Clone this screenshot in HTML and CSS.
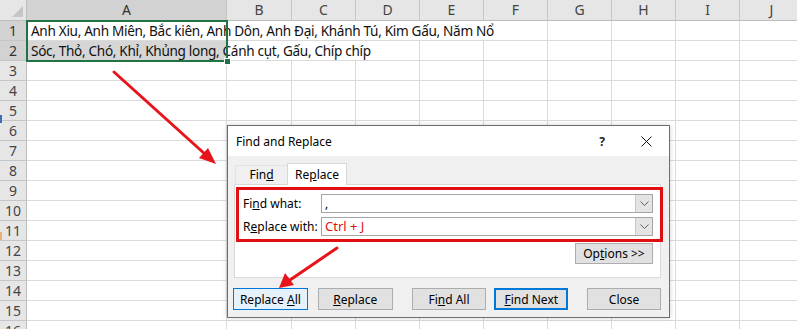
FILE: index.html
```html
<!DOCTYPE html>
<html>
<head>
<meta charset="utf-8">
<link rel="stylesheet" href="styles.css">
</head>
<body>
<div class="sheet">
  <div class="corner"><span class="tri"></span></div>
  <div class="ch sel">A</div><div class="ch">B</div><div class="ch">C</div><div class="ch">D</div><div class="ch">E</div><div class="ch">F</div><div class="ch">G</div><div class="ch">H</div><div class="ch">I</div><div class="ch">J</div>

  <div class="rh sel">1</div><div class="cell txt span6">Anh Xiu, Anh Miên, Bắc kiên, Anh Dôn, Anh Đại, Khánh Tú, Kim Gấu, Năm Nổ</div><div class="cell"></div><div class="cell"></div><div class="cell"></div><div class="cell"></div>

  <div class="rh sel">2</div><div class="cell txt span4 grayA">Sóc, Thỏ, Chó, Khỉ, Khủng long, Cánh cụt, Gấu, Chíp chíp</div><div class="cell"></div><div class="cell"></div><div class="cell"></div><div class="cell"></div><div class="cell"></div><div class="cell"></div>

  <div class="rh">3</div><div class="cell"></div><div class="cell"></div><div class="cell"></div><div class="cell"></div><div class="cell"></div><div class="cell"></div><div class="cell"></div><div class="cell"></div><div class="cell"></div><div class="cell"></div>
  <div class="rh">4</div><div class="cell"></div><div class="cell"></div><div class="cell"></div><div class="cell"></div><div class="cell"></div><div class="cell"></div><div class="cell"></div><div class="cell"></div><div class="cell"></div><div class="cell"></div>
  <div class="rh">5</div><div class="cell"></div><div class="cell"></div><div class="cell"></div><div class="cell"></div><div class="cell"></div><div class="cell"></div><div class="cell"></div><div class="cell"></div><div class="cell"></div><div class="cell"></div>
  <div class="rh">6</div><div class="cell"></div><div class="cell"></div><div class="cell"></div><div class="cell"></div><div class="cell"></div><div class="cell"></div><div class="cell"></div><div class="cell"></div><div class="cell"></div><div class="cell"></div>
  <div class="rh">7</div><div class="cell"></div><div class="cell"></div><div class="cell"></div><div class="cell"></div><div class="cell"></div><div class="cell"></div><div class="cell"></div><div class="cell"></div><div class="cell"></div><div class="cell"></div>
  <div class="rh">8</div><div class="cell"></div><div class="cell"></div><div class="cell"></div><div class="cell"></div><div class="cell"></div><div class="cell"></div><div class="cell"></div><div class="cell"></div><div class="cell"></div><div class="cell"></div>
  <div class="rh">9</div><div class="cell"></div><div class="cell"></div><div class="cell"></div><div class="cell"></div><div class="cell"></div><div class="cell"></div><div class="cell"></div><div class="cell"></div><div class="cell"></div><div class="cell"></div>
  <div class="rh">10</div><div class="cell"></div><div class="cell"></div><div class="cell"></div><div class="cell"></div><div class="cell"></div><div class="cell"></div><div class="cell"></div><div class="cell"></div><div class="cell"></div><div class="cell"></div>
  <div class="rh">11</div><div class="cell"></div><div class="cell"></div><div class="cell"></div><div class="cell"></div><div class="cell"></div><div class="cell"></div><div class="cell"></div><div class="cell"></div><div class="cell"></div><div class="cell"></div>
  <div class="rh">12</div><div class="cell"></div><div class="cell"></div><div class="cell"></div><div class="cell"></div><div class="cell"></div><div class="cell"></div><div class="cell"></div><div class="cell"></div><div class="cell"></div><div class="cell"></div>
  <div class="rh">13</div><div class="cell"></div><div class="cell"></div><div class="cell"></div><div class="cell"></div><div class="cell"></div><div class="cell"></div><div class="cell"></div><div class="cell"></div><div class="cell"></div><div class="cell"></div>
  <div class="rh">14</div><div class="cell"></div><div class="cell"></div><div class="cell"></div><div class="cell"></div><div class="cell"></div><div class="cell"></div><div class="cell"></div><div class="cell"></div><div class="cell"></div><div class="cell"></div>
  <div class="rh">15</div><div class="cell"></div><div class="cell"></div><div class="cell"></div><div class="cell"></div><div class="cell"></div><div class="cell"></div><div class="cell"></div><div class="cell"></div><div class="cell"></div><div class="cell"></div>
  <div class="rh">16</div><div class="cell"></div><div class="cell"></div><div class="cell"></div><div class="cell"></div><div class="cell"></div><div class="cell"></div><div class="cell"></div><div class="cell"></div><div class="cell"></div><div class="cell"></div>
</div>

<div class="edge-mark blue"></div>
<div class="edge-mark orange"></div>

<div class="selection"><span class="handle"></span></div>

<div class="dialog">
  <div class="titlebar">
    <span class="title">Find and Replace</span>
    <span class="help">?</span>
    <span class="close-x">
      <svg width="11" height="11" viewBox="0 0 11 11"><path d="M0.5 0.5 L10.5 10.5 M10.5 0.5 L0.5 10.5" stroke="#111" stroke-width="1" fill="none"/></svg>
    </span>
  </div>
  <div class="dbody">
    <div class="tabs">
      <div class="tab">Fin<u>d</u></div>
      <div class="tab active">Re<u>p</u>lace</div>
    </div>
    <div class="panel">
      <div class="frow">
        <span class="label">Fi<u>n</u>d what:</span>
        <div class="combo"><span class="val">,</span><span class="drop"><svg width="9" height="5" viewBox="0 0 9 5"><path d="M0.5 0.5 L4.5 4.5 L8.5 0.5" stroke="#606060" fill="none"/></svg></span></div>
      </div>
      <div class="frow">
        <span class="label">R<u>e</u>place with:</span>
        <div class="combo"><span class="val red">Ctrl + J</span><span class="drop"><svg width="9" height="5" viewBox="0 0 9 5"><path d="M0.5 0.5 L4.5 4.5 L8.5 0.5" stroke="#606060" fill="none"/></svg></span></div>
      </div>
      <div class="orow"><button class="btn opt">Op<u>t</u>ions &gt;&gt;</button></div>
    </div>
    <div class="brow">
      <button class="btn primary">Replace <u>A</u>ll</button>
      <button class="btn g10"><u>R</u>eplace</button>
      <button class="btn g19">Fi<u>n</u>d All</button>
      <button class="btn g8 focus"><u>F</u>ind Next</button>
      <button class="btn g19">Close</button>
    </div>
  </div>
</div>

<div class="redbox"></div>

<svg class="arrows" width="797" height="329" viewBox="0 0 797 329">
  <line x1="114" y1="72" x2="206" y2="155" stroke="#e8141b" stroke-width="3" stroke-linecap="round"/>
  <polygon points="216,164 199,158 208,148" fill="#e8141b"/>
  <line x1="337" y1="248" x2="290" y2="280" stroke="#e8141b" stroke-width="3" stroke-linecap="round"/>
  <polygon points="279,288 285,273 294,285" fill="#e8141b"/>
</svg>
</body>
</html>
```

FILE: styles.css
```css
html, body {
  margin: 0;
  padding: 0;
}
body {
  width: 797px;
  height: 329px;
  overflow: hidden;
  position: relative;
  background: #fff;
  font-family: "Noto Sans", "DejaVu Sans", sans-serif;
}

.sheet {
  display: grid;
  grid-template-columns: 27px 200px 65px repeat(8, 64px);
  grid-template-rows: 21px;
  grid-auto-rows: 20px;
  width: 804px;
}
.sheet > div {
  box-sizing: border-box;
}
.corner {
  background: #e6e6e6;
  border-right: 1px solid #bdbdbd;
  border-bottom: 1px solid #bdbdbd;
  position: relative;
}
.corner .tri {
  position: absolute;
  right: 3px;
  bottom: 3px;
  width: 0;
  height: 0;
  border-left: 11px solid transparent;
  border-bottom: 11px solid #c6c6c6;
}
.ch {
  background: #e6e6e6;
  border-right: 1px solid #c6c6c6;
  border-bottom: 1px solid #bdbdbd;
  text-align: center;
  font-size: 14px;
  line-height: 20px;
  color: #444;
}
.rh {
  background: #e6e6e6;
  border-right: 1px solid #bdbdbd;
  border-bottom: 1px solid #c6c6c6;
  text-align: center;
  font-size: 14px;
  line-height: 19px;
  color: #444;
}
.ch.sel, .rh.sel {
  background: #d2d2d2;
  color: #333;
}
.cell {
  border-right: 1px solid #dadada;
  border-bottom: 1px solid #dadada;
}
.txt {
  font-size: 13.6px;
  line-height: 19px;
  padding-left: 4px;
  color: #111;
  white-space: nowrap;
  letter-spacing: -0.32px;
}
.span6 { grid-column: span 6; }
.span4 { grid-column: span 4; }
.grayA {
  background: linear-gradient(to right, #d6d6d6 199px, #fff 199px);
}

.edge-mark {
  position: absolute;
  left: 0;
  width: 2px;
  height: 8px;
}
.edge-mark.blue { top: 115px; background: #3b6fb6; }
.edge-mark.orange { top: 232px; background: #e8b07a; }

.selection {
  position: absolute;
  left: 26px;
  top: 20px;
  width: 202px;
  height: 42px;
  box-sizing: border-box;
  border: 2px solid #217346;
}
.selection .handle {
  position: absolute;
  right: -5px;
  bottom: -5px;
  width: 5px;
  height: 5px;
  background: #217346;
  border: 1px solid #fff;
}

.dialog {
  position: absolute;
  left: 227px;
  top: 125px;
  width: 443px;
  height: 193px;
  box-sizing: border-box;
  border: 1px solid #6e6e6e;
  background: #f0f0f0;
  font-family: "Noto Sans", "DejaVu Sans", sans-serif;
  font-size: 12px;
  color: #000;
  display: flex;
  flex-direction: column;
  box-shadow: 0 0 5px rgba(0, 0, 0, 0.18);
}
.titlebar {
  height: 30px;
  background: #fff;
  display: flex;
  align-items: center;
  padding-left: 8px;
}
.title {
  flex: 1;
  font-size: 12px;
}
.help {
  width: 14px;
  text-align: center;
  margin-right: 14px;
  font-size: 12px;
  font-weight: bold;
  color: #222;
}
.close-x {
  width: 46px;
  display: flex;
  justify-content: center;
  align-items: center;
}
.dbody {
  padding: 7px 8px 0 6px;
}
.tabs {
  display: flex;
  align-items: flex-end;
  height: 21px;
  margin-left: 1px;
  position: relative;
  z-index: 1;
}
.tab {
  box-sizing: border-box;
  width: 53px;
  height: 19px;
  line-height: 18px;
  text-align: center;
  border: 1px solid #e3e3e3;
  border-bottom: none;
  background: #f0f0f0;
}
.tab.active {
  width: 60px;
  height: 22px;
  line-height: 21px;
  background: #fff;
  border-color: #d9d9d9;
  margin-bottom: -1px;
  margin-left: -1px;
}
.panel {
  box-sizing: border-box;
  height: 94px;
  border: 1px solid #d9d9d9;
  background: #fff;
  padding: 9px 7px 9px 8px;
}
.frow {
  display: flex;
  align-items: center;
  height: 19px;
  margin-bottom: 4px;
}
.label {
  width: 78px;
}
.combo {
  box-sizing: border-box;
  width: 332px;
  height: 19px;
  border: 1px solid #a5a5a5;
  display: flex;
  align-items: center;
}
.combo .val {
  flex: 1;
  padding-left: 3px;
  font-size: 12px;
  line-height: 17px;
}
.combo .val.red {
  color: #e01010;
  font-size: 13px;
}
.drop {
  width: 16px;
  height: 17px;
  background: #e4e4e4;
  border-left: 1px solid #c8c8c8;
  display: flex;
  align-items: center;
  justify-content: center;
}
.orow {
  display: flex;
  justify-content: flex-end;
  margin-top: 7px;
}
.btn {
  box-sizing: border-box;
  height: 22px;
  width: 75px;
  padding: 0;
  border: 1px solid #adadad;
  background: #e1e1e1;
  font-family: "Noto Sans", "DejaVu Sans", sans-serif;
  font-size: 12px;
  color: #000;
}
.btn.opt {
  width: 78px;
  height: 21px;
}
.brow {
  display: flex;
  margin-top: 10px;
  margin-left: -1px;
}
.btn.primary {
  border-color: #0078d7;
  background: #e5f1fb;
}
.btn.focus {
  border: 2px solid #0078d7;
  width: 74px;
}
.g10 { margin-left: 10px; }
.g19 { margin-left: 19px; }
.g8 { margin-left: 8px; }
.brow .btn:last-child { width: 74px; }

.redbox {
  position: absolute;
  left: 236px;
  top: 187px;
  width: 427px;
  height: 55px;
  box-sizing: border-box;
  border: 3px solid #e10f12;
}
.arrows {
  position: absolute;
  left: 0;
  top: 0;
  pointer-events: none;
}
```
